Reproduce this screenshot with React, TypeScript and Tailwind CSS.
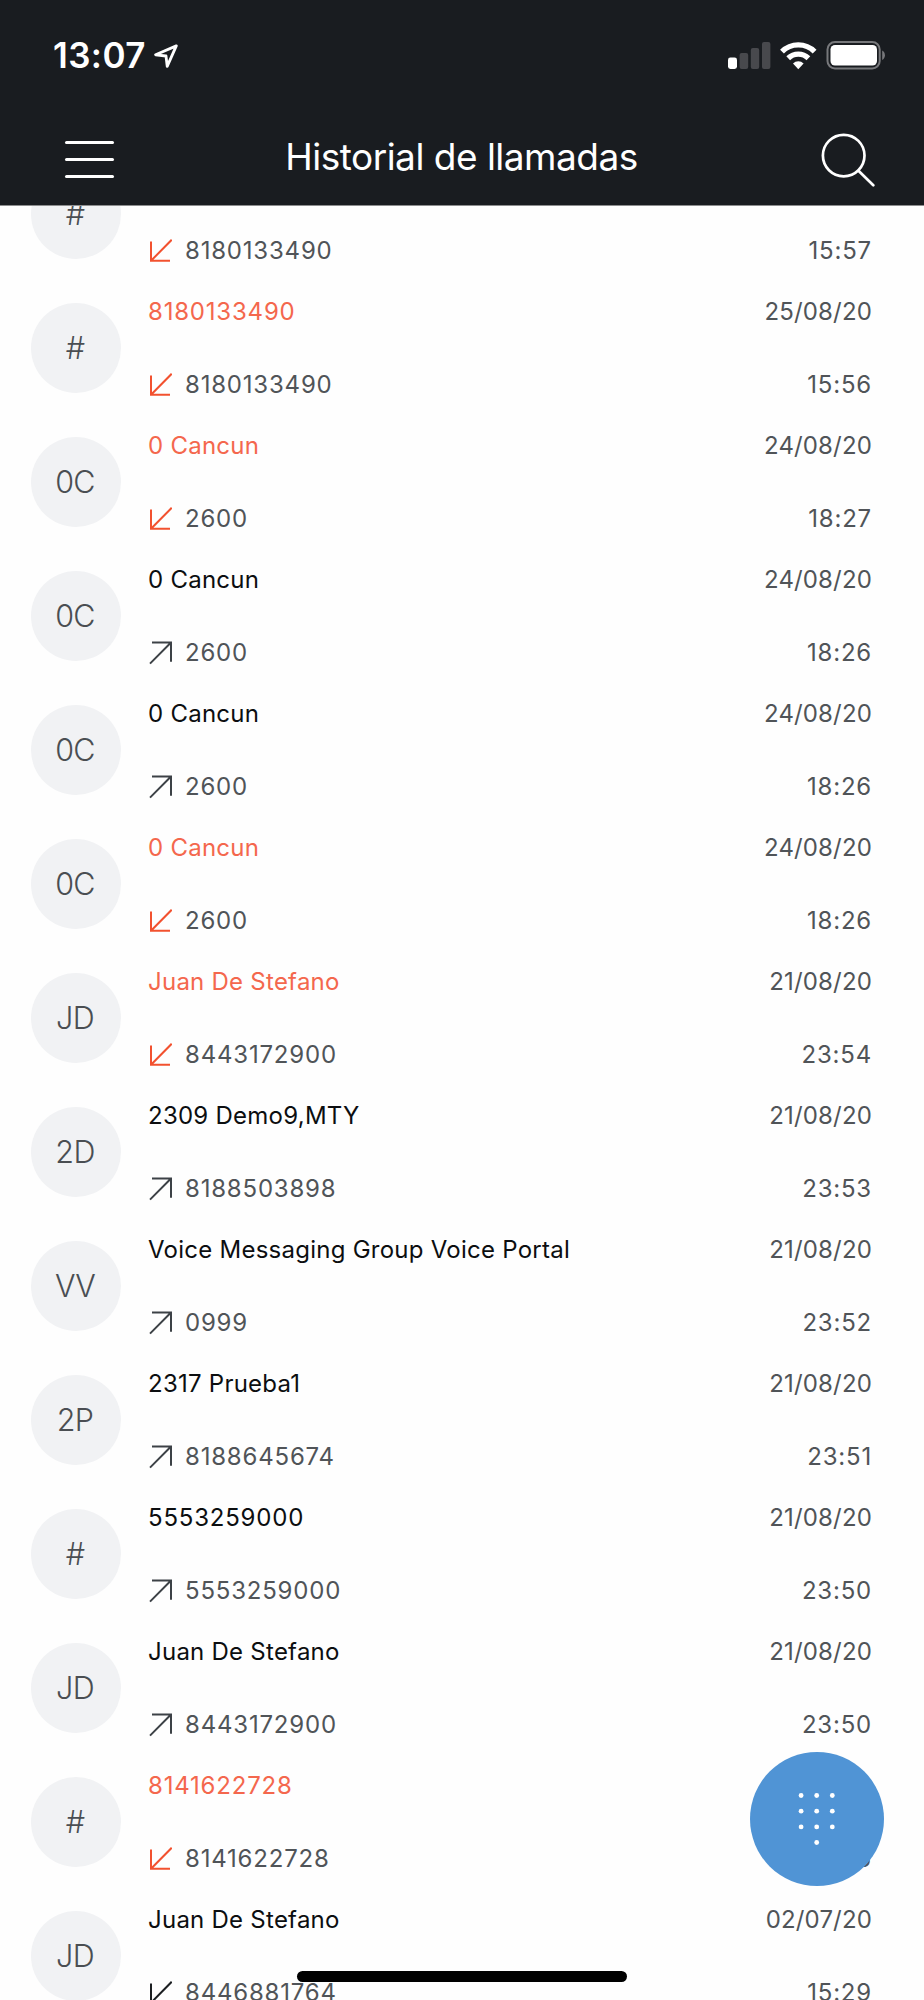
import React from 'react';

type Direction = 'missed' | 'outgoing' | 'incoming';

interface Call {
    initials: string;
    name: string;
    number: string;
    date: string;
    time: string;
    direction: Direction;
}

const calls: Call[] = [
    { initials: '#', name: '8180133490', number: '8180133490', date: '25/08/20', time: '15:57', direction: 'missed' },
    { initials: '#', name: '8180133490', number: '8180133490', date: '25/08/20', time: '15:56', direction: 'missed' },
    { initials: '0C', name: '0 Cancun', number: '2600', date: '24/08/20', time: '18:27', direction: 'missed' },
    { initials: '0C', name: '0 Cancun', number: '2600', date: '24/08/20', time: '18:26', direction: 'outgoing' },
    { initials: '0C', name: '0 Cancun', number: '2600', date: '24/08/20', time: '18:26', direction: 'outgoing' },
    { initials: '0C', name: '0 Cancun', number: '2600', date: '24/08/20', time: '18:26', direction: 'missed' },
    { initials: 'JD', name: 'Juan De Stefano', number: '8443172900', date: '21/08/20', time: '23:54', direction: 'missed' },
    { initials: '2D', name: '2309 Demo9,MTY', number: '8188503898', date: '21/08/20', time: '23:53', direction: 'outgoing' },
    { initials: 'VV', name: 'Voice Messaging Group Voice Portal', number: '0999', date: '21/08/20', time: '23:52', direction: 'outgoing' },
    { initials: '2P', name: '2317 Prueba1', number: '8188645674', date: '21/08/20', time: '23:51', direction: 'outgoing' },
    { initials: '#', name: '5553259000', number: '5553259000', date: '21/08/20', time: '23:50', direction: 'outgoing' },
    { initials: 'JD', name: 'Juan De Stefano', number: '8443172900', date: '21/08/20', time: '23:50', direction: 'outgoing' },
    { initials: '#', name: '8141622728', number: '8141622728', date: '', time: '18:56', direction: 'missed' },
    { initials: 'JD', name: 'Juan De Stefano', number: '8446881764', date: '02/07/20', time: '15:29', direction: 'incoming' },
];

const arrowColorMap: { [key in Direction]: string } = {
    missed: 'text-[#f2512f]',
    outgoing: 'text-[#3c4146]',
    incoming: 'text-[#1c1f22]',
};

const DirectionIcon: React.FC<{ direction: Direction }> = ({ direction }) => (
    <svg className={`h-6 w-6 shrink-0 ${arrowColorMap[direction]}`} viewBox="0 0 24 24" fill="none" stroke="currentColor" strokeWidth="2">
        {direction === 'outgoing' ? (
            <path d="M4 1.5H23V20.8M2 22.6L23 1.5" />
        ) : (
            <path d="M3 2.5V21.8H22M3 21.8L23.7 0.8" />
        )}
    </svg>
);

const CallRow: React.FC<{ call: Call }> = ({ call }) => {
    const nameColor = call.direction === 'missed' ? 'text-[#f4674d]' : 'text-[#0c0e10]';
    // plain phone numbers are set a little wider than contact names
    const nameTracking = /^\d+$/.test(call.name) ? 'tracking-[0.8px]' : 'tracking-[0.25px]';

    return (
        <li className="flex h-[134px] items-center pl-[31px] pr-[52px]">
            <div className="flex h-[90px] w-[90px] shrink-0 items-center justify-center rounded-full bg-[#f1f2f4] pr-[2px] text-[30.5px] font-light tracking-[-0.7px] text-[#4a4e52]">
                {call.initials}
            </div>
            <div className="ml-[27px] flex flex-1 flex-col gap-[43px] pt-px">
                <div className="flex h-[30px] items-center justify-between">
                    <span className={`${nameColor} ${nameTracking}`}>{call.name}</span>
                    <span className="tracking-[0.15px] text-[#505458]">{call.date}</span>
                </div>
                <div className="flex h-[30px] items-center">
                    <DirectionIcon direction={call.direction} />
                    <span className="ml-[13px] flex-1 text-[#505458]">{call.number}</span>
                    <span className="text-[#505458]">{call.time}</span>
                </div>
            </div>
        </li>
    );
};

const StatusBar: React.FC = () => (
    <div className="flex h-[110px] items-center justify-between pl-[53px] pr-[38px]">
        <div className="flex items-center gap-[8px] pt-px">
            <span className="text-[35px] font-semibold tracking-[0.4px]">13:07</span>
            <svg className="h-6 w-6" viewBox="0 0 24 24" fill="none" stroke="#fff" strokeWidth="2.8" strokeLinejoin="round">
                <path d="M22.3 1.9L1.6 10.8L12 12L13.2 22.4Z" />
            </svg>
        </div>
        <svg className="h-[30px] w-[158px]" viewBox="0 0 158 30">
            <rect x="0" y="17.5" width="9" height="11.5" rx="2.4" fill="#fff" />
            <rect x="11.6" y="13" width="8.6" height="16" rx="2" fill="#48494d" />
            <rect x="22.8" y="8" width="8.4" height="21" rx="2" fill="#48494d" />
            <rect x="34" y="2" width="8.4" height="27" rx="2" fill="#48494d" />
            <g fill="none" stroke="#fff" strokeWidth="5.4">
                <path d="M54 11.6A23 23 0 0 1 86.6 11.6" />
                <path d="M60.2 18.2A14.5 14.5 0 0 1 80.4 18.2" />
            </g>
            <path d="M70.3 29.2L65 23.4A7.5 7.5 0 0 1 75.6 23.4Z" fill="#fff" />
            <rect x="99.5" y="2" width="52.2" height="26.5" rx="7.5" fill="none" stroke="#77787b" strokeWidth="2" />
            <rect x="102.5" y="5" width="46.5" height="20.5" rx="4.5" fill="#fff" />
            <path d="M154.2 10.5A5.5 5.5 0 0 1 154.2 20Z" fill="#77787b" />
        </svg>
    </div>
);

const NavBar: React.FC = () => (
    <div className="flex h-[95px] items-center justify-between pl-[65px] pr-[49px] pt-[4px]">
        <div className="flex w-[49px] flex-col gap-[14px]">
            <span className="h-[3px] rounded-full bg-white" />
            <span className="h-[3px] rounded-full bg-white" />
            <span className="h-[3px] rounded-full bg-white" />
        </div>
        <h1 className="-mt-[6px] -ml-[12px] text-[37px] tracking-[-0.5px]">Historial de llamadas</h1>
        <svg className="h-[54px] w-[54px]" viewBox="0 0 54 54" fill="none" stroke="#fff" strokeWidth="2.7" strokeLinecap="round">
            <circle cx="22.7" cy="22.6" r="20.8" />
            <path d="M37.5 37.8L52.3 52.2" />
        </svg>
    </div>
);

const DialPadButton: React.FC = () => (
    <button className="absolute left-[750px] top-[1752px] h-[134px] w-[134px] rounded-full bg-[#5094d5]">
        <svg className="h-full w-full" viewBox="0 0 134 134" fill="#fff">
            {[43.5, 59.2, 74.9].map((y) => [51.1, 66.7, 82.3].map((x) => <circle key={`${x}-${y}`} cx={x} cy={y} r="2.4" />))}
            <circle cx="66.7" cy="90.5" r="2.4" />
        </svg>
    </button>
);

export default function App() {
    return (
        <div className="relative h-[2000px] w-[924px] overflow-hidden bg-[#fefefe] font-['Inter',sans-serif]">
            <header className="relative z-10 border-b border-[#8c8d8e] bg-[#191c20] text-white">
                <StatusBar />
                <NavBar />
            </header>
            <ul className="-mt-[59px] text-[24px] tracking-[0.8px]">
                {calls.map((call, i) => <CallRow key={i} call={call} />)}
            </ul>
            <DialPadButton />
            <div className="absolute left-[297px] top-[1971px] h-[11px] w-[330px] rounded-full bg-black" />
        </div>
    );
}
